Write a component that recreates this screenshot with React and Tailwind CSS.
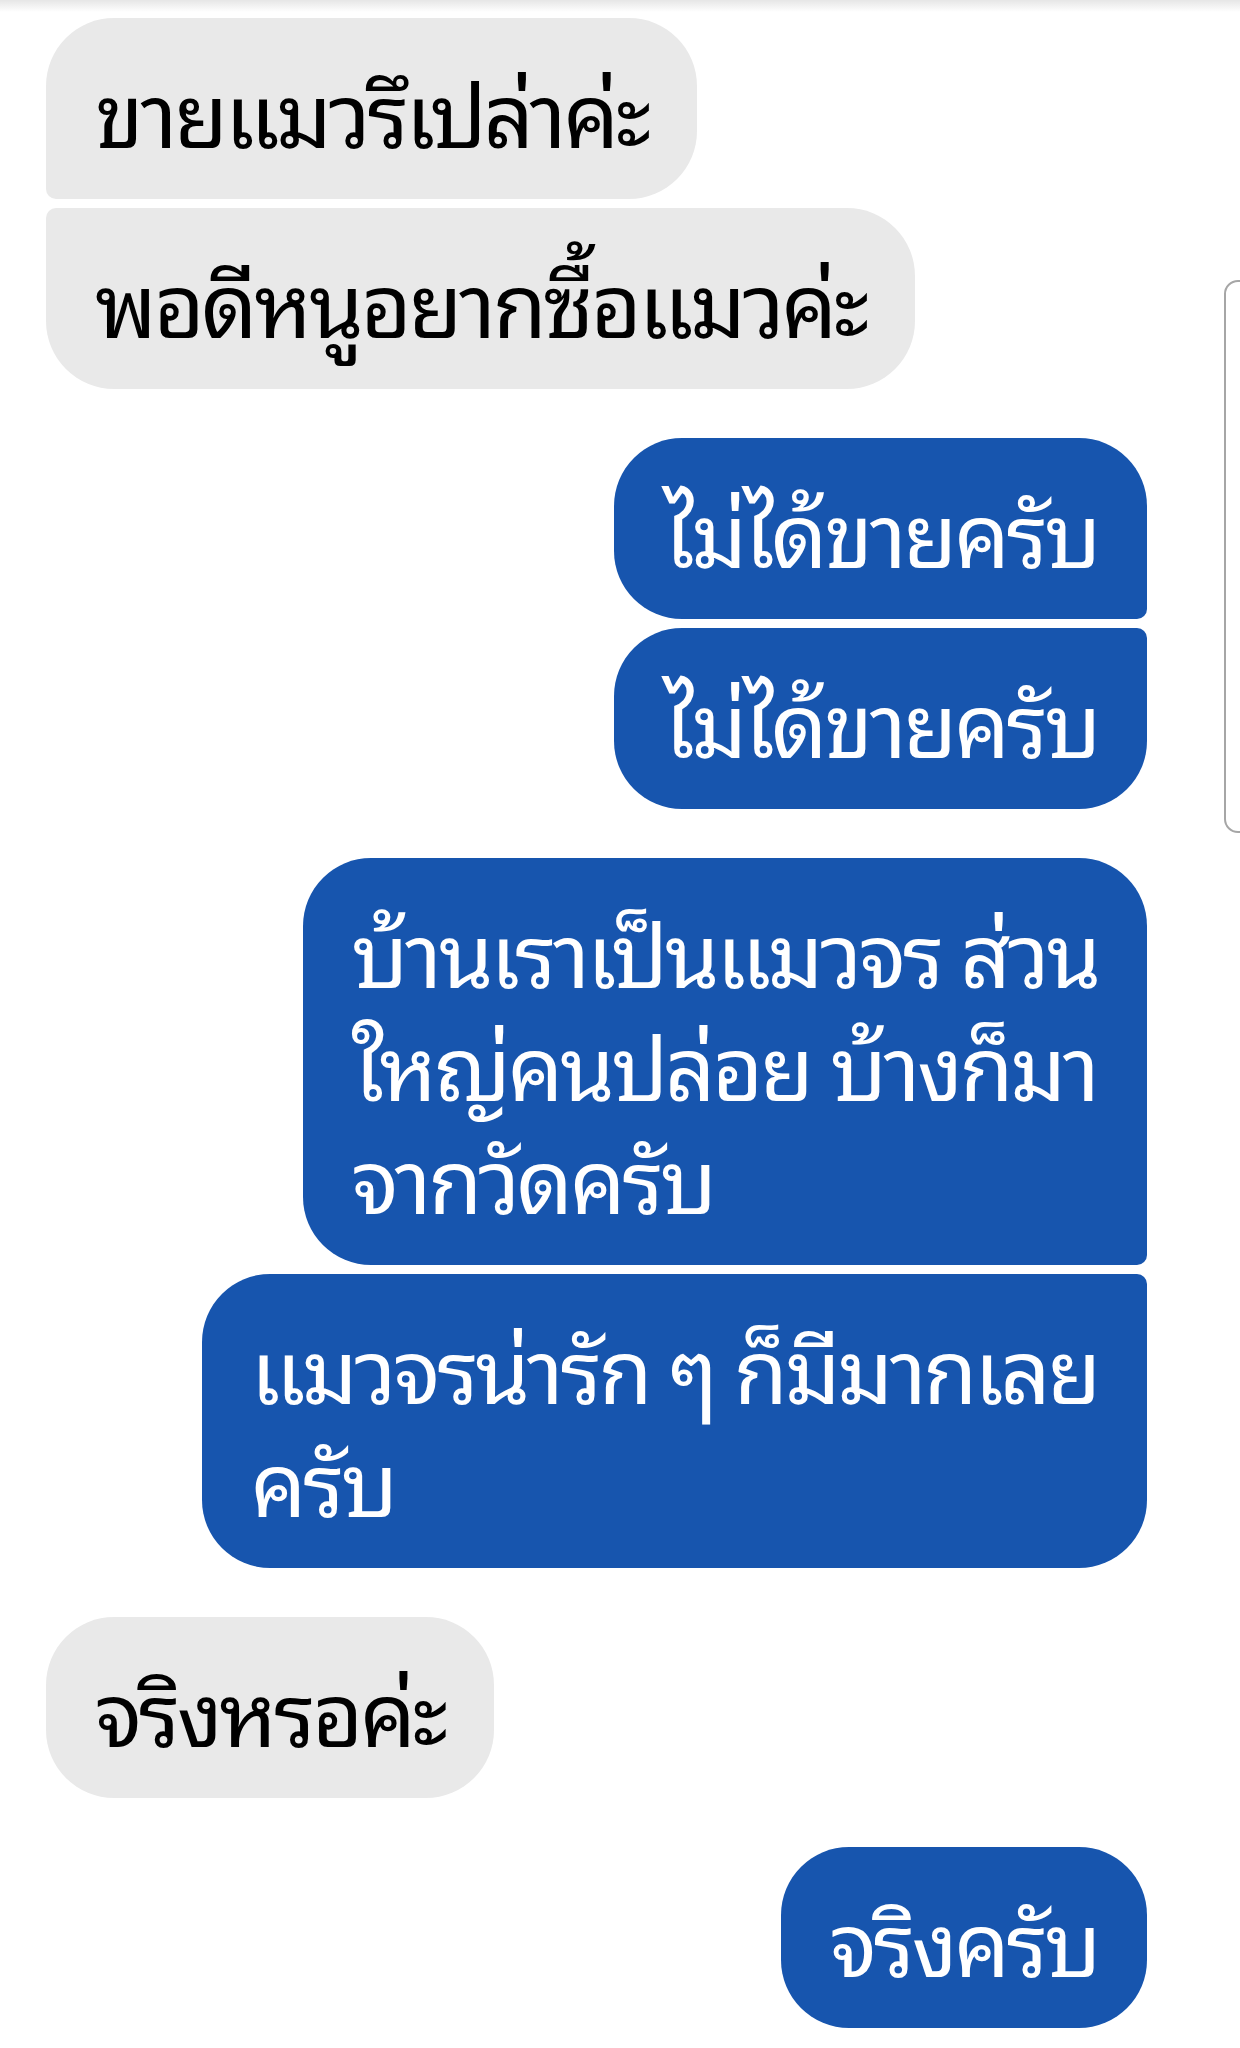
import React from "react";

const font = { fontFamily: '"Noto Sans Thai Looped", "Loma", "Garuda", "Tahoma", "Noto Sans Thai", "Noto Sans", sans-serif' };

function Bubble({ lines, side, corners }) {
  const color =
    side === "left" ? "bg-[#e9e9e9] text-black" : "bg-[#1755ae] text-white";
  return (
    <div
      className={`w-fit px-[49px] pt-[34px] pb-[34px] text-[88px] leading-[113px] tracking-[-3.4px] whitespace-nowrap ${color} ${corners}`}
    >
      {lines.map((l, i) => (
        <React.Fragment key={i}>
          {i > 0 && <br />}
          {l}
        </React.Fragment>
      ))}
    </div>
  );
}

export default function App() {
  return (
    <div
      className="relative w-[1240px] h-[2048px] bg-white overflow-hidden"
      style={font}
    >
      <div className="absolute top-0 left-0 right-0 h-[12px] bg-gradient-to-b from-[#e6e6e6] to-white" />
      <div className="absolute left-[1224px] top-[280px] w-[40px] h-[553px] rounded-l-[14px] border-2 border-[#a6a6a6] bg-white" />
      <div className="flex flex-col pt-[18px] pl-[46px] pr-[93px] gap-[49px]">
        <div className="flex flex-col items-start gap-[9px]">
          <Bubble
            side="left"
            lines={["ขายแมวรึเปล่าค่ะ"]}
            corners="rounded-tl-[68px] rounded-tr-[68px] rounded-br-[68px] rounded-bl-[10px]"
          />
          <Bubble
            side="left"
            lines={["พอดีหนูอยากซื้อแมวค่ะ"]}
            corners="rounded-tl-[10px] rounded-tr-[68px] rounded-br-[68px] rounded-bl-[68px]"
          />
        </div>
        <div className="flex flex-col items-end gap-[9px]">
          <Bubble
            side="right"
            lines={["ไม่ได้ขายครับ"]}
            corners="rounded-tl-[68px] rounded-tr-[68px] rounded-br-[10px] rounded-bl-[68px]"
          />
          <Bubble
            side="right"
            lines={["ไม่ได้ขายครับ"]}
            corners="rounded-tl-[68px] rounded-tr-[10px] rounded-br-[68px] rounded-bl-[68px]"
          />
        </div>
        <div className="flex flex-col items-end gap-[9px]">
          <Bubble
            side="right"
            lines={["บ้านเราเป็นแมวจร ส่วน", "ใหญ่คนปล่อย บ้างก็มา", "จากวัดครับ"]}
            corners="rounded-tl-[68px] rounded-tr-[68px] rounded-br-[10px] rounded-bl-[68px]"
          />
          <Bubble
            side="right"
            lines={["แมวจรน่ารัก ๆ ก็มีมากเลย", "ครับ"]}
            corners="rounded-tl-[68px] rounded-tr-[10px] rounded-br-[68px] rounded-bl-[68px]"
          />
        </div>
        <div className="flex flex-col items-start">
          <Bubble
            side="left"
            lines={["จริงหรอค่ะ"]}
            corners="rounded-[68px]"
          />
        </div>
        <div className="flex flex-col items-end">
          <Bubble
            side="right"
            lines={["จริงครับ"]}
            corners="rounded-[68px]"
          />
        </div>
      </div>
    </div>
  );
}
